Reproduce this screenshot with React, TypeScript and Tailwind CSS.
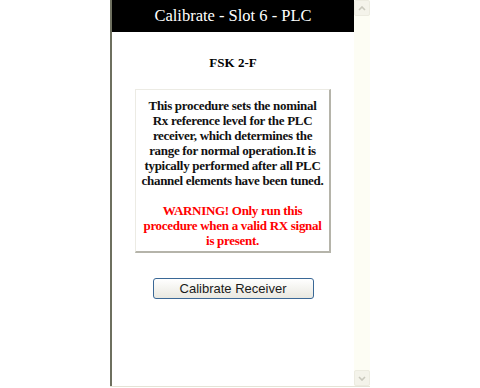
function ScrollArrow({ down }: { down?: boolean }) {
  return (
    <div className="flex h-[16px] w-[16px] items-center justify-center rounded-[2px] border border-[#ecebe0] bg-[#f4f3ea]">
      <svg viewBox="0 0 8 5" className="h-[5px] w-[8px]">
        <path
          d={down ? "M1 1 L4 4 L7 1" : "M1 4 L4 1 L7 4"}
          fill="none"
          stroke="#c9c8bc"
          strokeWidth="1.6"
        />
      </svg>
    </div>
  )
}

export default function App() {
  return (
    <div className="flex h-[388px] w-[480px] bg-white pl-[110px]">
      <div className="flex h-[387px] w-[260px] border-b border-[#e4e3d6]">
        <div className="flex w-[244px] flex-col border-l-2 border-[#6e705f] font-['Liberation_Serif',serif]">
          <div className="flex h-[32px] items-center justify-center bg-black text-[16.5px] text-white">
            Calibrate - Slot 6 - PLC
          </div>
          <div className="mt-[23px] text-center text-[13px] font-bold leading-[15px] text-black">FSK 2-F</div>
          <div className="mx-auto mt-[19px] w-[196px] whitespace-nowrap border border-t-[#ecebe4] border-l-[#ecebe4] border-r-2 border-b-2 border-r-[#b5b4aa] border-b-[#b5b4aa] bg-white pt-[8px] pb-[3px] text-center text-[13px] font-bold leading-[15px] tracking-[-0.3px] text-[#111]">
            <p>
              This procedure sets the nominal
              <br />
              Rx reference level for the PLC
              <br />
              receiver, which determines the
              <br />
              range for normal operation.It is
              <br />
              typically performed after all PLC
              <br />
              channel elements have been tuned.
            </p>
            <p className="mt-[15px] text-[#ff0000]">
              WARNING! Only run this
              <br />
              procedure when a valid RX signal
              <br />
              is present.
            </p>
          </div>
          <div className="mt-[25px] flex justify-center">
            <button className="h-[21px] w-[161px] rounded-[3px] border border-[#3a6896] bg-gradient-to-b from-white to-[#e9e8e0] font-['Liberation_Sans',sans-serif] text-[13px] leading-[19px] text-[#1a1a1a]">
              Calibrate Receiver
            </button>
          </div>
        </div>
        <div className="flex w-[16px] flex-col justify-between bg-[#fdfdf4]">
          <ScrollArrow />
          <ScrollArrow down />
        </div>
      </div>
    </div>
  )
}
